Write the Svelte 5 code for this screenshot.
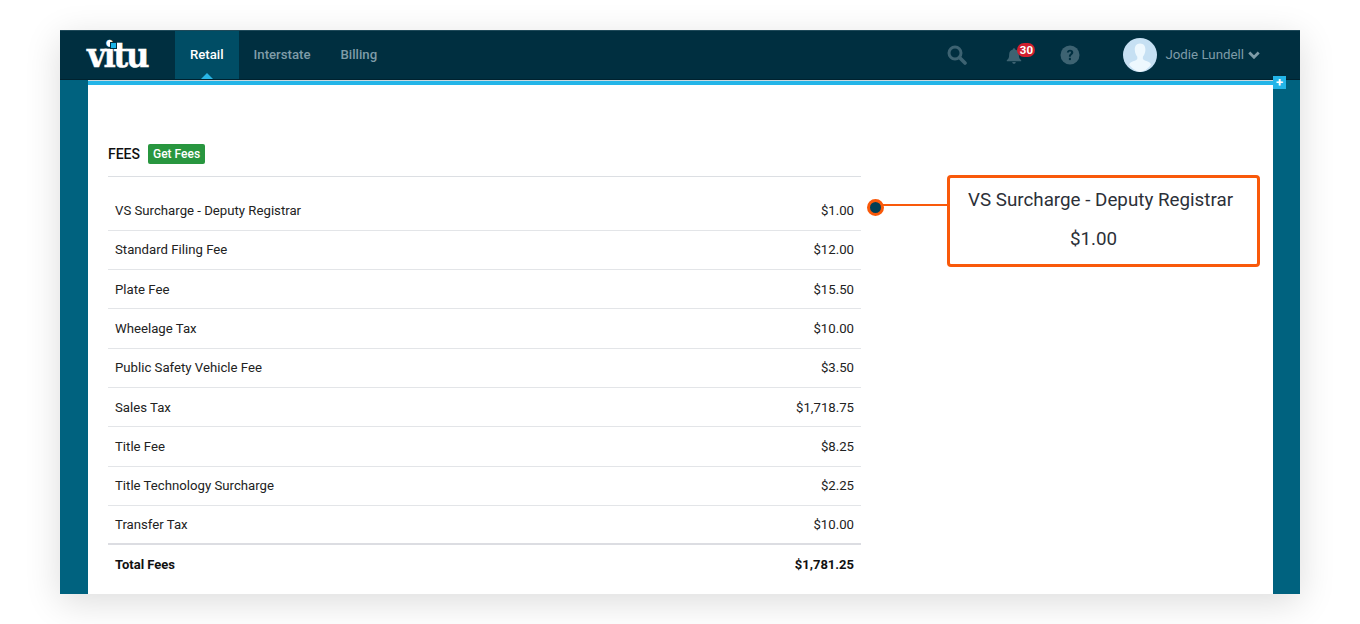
<script lang="ts">
  const fees = [
    { name: "VS Surcharge - Deputy Registrar", amount: "$1.00" },
    { name: "Standard Filing Fee", amount: "$12.00" },
    { name: "Plate Fee", amount: "$15.50" },
    { name: "Wheelage Tax", amount: "$10.00" },
    { name: "Public Safety Vehicle Fee", amount: "$3.50" },
    { name: "Sales Tax", amount: "$1,718.75" },
    { name: "Title Fee", amount: "$8.25" },
    { name: "Title Technology Surcharge", amount: "$2.25" },
    { name: "Transfer Tax", amount: "$10.00" },
  ];
</script>

<div class="frame">
  <div class="window">
    <header class="nav">
      <div class="logo">vitu<span class="logo-dot"></span></div>
      <nav class="tabs">
        <span class="tab active">Retail</span>
        <span class="tab">Interstate</span>
        <span class="tab">Billing</span>
      </nav>
      <div class="tools">
        <svg class="search" viewBox="0 0 20 20" fill="none" stroke="currentColor">
          <circle cx="8" cy="8" r="6" stroke-width="3" />
          <path d="M12.5 12.5 18 18" stroke-width="3.6" stroke-linecap="round" />
        </svg>
        <div class="bell">
          <svg viewBox="0 0 20 20" fill="currentColor">
            <path d="M10 1.5a1.3 1.3 0 0 1 1.3 1.4C14 3.5 15.4 5.700 15.400 8.500c0 3.300.8 4.800 2.600 6.200v1H2v-1c1.800-1.400 2.600-2.900 2.600-6.200 0-2.800 1.400-5 4.100-5.600A1.300 1.300 0 0 1 10 1.500Z" />
            <path d="M8 16.800h4a2 2 0 0 1-4 0Z" />
          </svg>
          <span class="badge">30</span>
        </div>
        <svg class="help" viewBox="0 0 20 20">
          <circle cx="10" cy="10" r="9.500" fill="currentColor" />
          <path d="M6.800 7.600c.2-1.900 1.500-2.900 3.300-2.900 1.900 0 3.200 1.100 3.200 2.700 0 2.300-2.500 2.300-2.500 4.300H8.900c0-2.900 2.100-2.900 2.100-4.200 0-.6-.4-1-1-1-.7 0-1 .4-1.200 1.100Z" fill="#002f40" />
          <rect x="8.900" y="12.800" width="2" height="2.300" fill="#002f40" />
        </svg>
        <div class="user">
          <svg class="avatar" viewBox="0 0 34 34">
            <circle cx="17" cy="17" r="17" fill="#c6e0f3" />
            <path d="M17 5.500c3.700 0 5.600 2.800 5.400 6.500-.2 3-1.300 5.400-2.500 6.800v2.200c1 1.400 3.800 2 5.800 3 1.400.7 2.100 1.600 2.300 2.800A17 17 0 0 1 17 34a17 17 0 0 1-10.800-7.200c.2-1.200.9-2.100 2.300-2.800 2-1 4.800-1.600 5.800-3v-2.200c-1.200-1.400-2.300-3.800-2.500-6.800-.2-3.700 1.700-6.500 5.200-6.500Z" fill="#eef8fe" />
          </svg>
          <span class="user-name">Jodie Lundell</span>
          <svg class="chevron" viewBox="0 0 12 8" fill="none" stroke="currentColor">
            <path d="M1.300 1.500 6 6.200l4.700-4.700" stroke-width="2.800" />
          </svg>
        </div>
      </div>
    </header>

    <main class="body">
      <section class="panel">
        <span class="plus">+</span>
        <div class="heading">
          <h2>FEES</h2>
          <span class="get-fees">Get Fees</span>
        </div>
        <div class="table">
          {#each fees as fee}
            <div class="row">
              <span>{fee.name}</span>
              <span>{fee.amount}</span>
            </div>
          {/each}
          <div class="row total">
            <span>Total Fees</span>
            <span>$1,781.25</span>
          </div>
        </div>

        <div class="marker"></div>
        <div class="leader"></div>
        <div class="callout">
          <div class="callout-name">VS Surcharge - Deputy Registrar</div>
          <div class="callout-amount">$1.00</div>
        </div>
      </section>
    </main>
  </div>
</div>

<style>
  :global(body) {
    margin: 0;
    background: #fff;
  }

  .frame {
    height: 624px;
    box-sizing: border-box;
    padding: 30px 60px;
    overflow: hidden;
    font-family: Roboto, "Liberation Sans", sans-serif;
  }

  .window {
    height: 564px;
    display: flex;
    flex-direction: column;
    background: #00627f;
    box-shadow: 0 8px 34px rgba(0, 0, 0, 0.14);
    overflow: hidden;
  }

  .nav {
    flex: none;
    height: 50px;
    display: flex;
    background: #002f40;
    border-top: 1px solid #1f4a5a;
    box-sizing: border-box;
    border-bottom: 1px solid #00222f;
  }

  .logo {
    position: relative;
    width: 115px;
    padding-left: 27px;
    box-sizing: border-box;
    font: 700 36px/46px "DejaVu Serif", serif;
    font-stretch: condensed;
    letter-spacing: -2.4px;
    -webkit-text-stroke: 0.4px #fff;
    color: #fff;
  }

  .logo-dot {
    position: absolute;
    left: 51px;
    top: 12px;
    width: 5px;
    height: 5px;
    background: #1cb5e8;
    box-shadow: 0 0 0 1px #002f40;
  }

  .tabs {
    display: flex;
  }

  .tab {
    position: relative;
    padding: 0 15px;
    font-size: 13.2px;
    font-weight: 500;
    line-height: 48px;
    color: #7f9ca8;
  }

  .tab.active {
    color: #fff;
    background: #004d65;
  }

  .tab.active::after {
    content: "";
    position: absolute;
    left: 50%;
    bottom: 0;
    margin-left: -6px;
    border: 6px solid transparent;
    border-top: 0;
    border-bottom-color: #28b6e6;
  }

  .tools {
    flex: 1;
    display: flex;
    align-items: center;
    justify-content: flex-end;
    color: #3d6372;
    padding-right: 40px;
  }

  .search {
    width: 20px;
    height: 20px;
    margin-right: 38px;
  }

  .bell {
    position: relative;
    width: 18px;
    height: 18px;
    margin-right: 37px;
  }

  .bell svg {
    width: 18px;
    height: 20px;
  }

  .badge {
    position: absolute;
    left: 12px;
    top: -3px;
    width: 18px;
    height: 14px;
    border-radius: 7px;
    background: #d11f2e;
    color: #fff;
    font-size: 11.5px;
    font-weight: 700;
    line-height: 14px;
    text-align: center;
  }

  .help {
    width: 20px;
    height: 20px;
    margin-right: 43px;
  }

  .user {
    display: flex;
    align-items: center;
    color: #7f9ca8;
    font-size: 13.3px;
  }

  .avatar {
    width: 34px;
    height: 34px;
    margin-right: 8px;
  }

  .user-name {
    position: relative;
    top: -1px;
  }

  .chevron {
    width: 12px;
    height: 8px;
    margin-left: 4px;
  }

  .body {
    flex: 1;
    min-height: 0;
    padding: 1px 27px 0 28px;
  }

  .panel {
    position: relative;
    height: 100%;
    box-sizing: border-box;
    background: #fff;
    border-top: 4px solid #23b5e8;
    box-shadow: 0 -1px 0 #c9d8de;
    padding: 54px 412px 0 20px;
  }

  .plus {
    position: absolute;
    right: -13px;
    top: -9px;
    width: 13px;
    height: 13px;
    background: #23b5e8;
    color: #fff;
    font-size: 13px;
    font-weight: 700;
    line-height: 13px;
    text-align: center;
  }

  .heading {
    display: flex;
    align-items: center;
    gap: 8px;
    height: 30px;
    padding-bottom: 7px;
    border-bottom: 1px solid #dcdfe3;
  }

  h2 {
    margin: 0;
    font-size: 14px;
    font-weight: 500;
    color: #111;
  }

  .get-fees {
    padding: 0 5px;
    height: 20px;
    line-height: 20px;
    border-radius: 2px;
    background: #28963f;
    color: #fff;
    font-size: 12px;
    font-weight: 500;
  }

  .table {
    padding-top: 14.3px;
  }

  .row {
    display: flex;
    justify-content: space-between;
    align-items: center;
    height: 39.33px;
    box-sizing: border-box;
    padding: 0 7px;
    border-bottom: 1px solid #e3e5e8;
    font-size: 13.2px;
    color: #222;
  }

  .row:nth-child(9) {
    border-bottom: 2px solid #dcdde2;
  }

  .row.total {
    border-bottom: 0;
    font-size: 13px;
    font-weight: 700;
    color: #111;
  }

  .marker {
    position: absolute;
    left: 779px;
    top: 114px;
    width: 11px;
    height: 11px;
    border: 3px solid #f9590a;
    border-radius: 50%;
    background: #003f55;
  }

  .leader {
    position: absolute;
    left: 795px;
    top: 119px;
    width: 65px;
    height: 2px;
    background: #f9590a;
  }

  .callout {
    position: absolute;
    left: 859px;
    top: 90px;
    width: 313px;
    height: 92px;
    box-sizing: border-box;
    border: 3px solid #f9590a;
    border-radius: 4px;
    background: #fff;
    text-align: center;
    color: #2c3038;
    font-size: 18.8px;
    line-height: 39px;
    padding-top: 3px;
  }

  .callout-name {
    padding-right: 6px;
  }

  .callout-amount {
    padding-right: 20px;
  }
</style>
